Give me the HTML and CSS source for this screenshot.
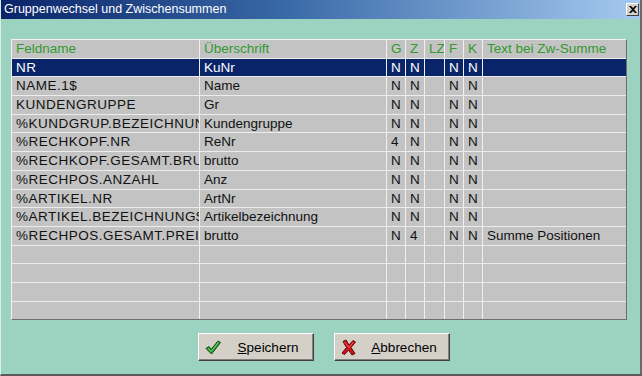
FILE: index.html
```html
<!DOCTYPE html>
<html lang="de">
<head>
<meta charset="utf-8">
<title>Gruppenwechsel und Zwischensummen</title>
<link rel="stylesheet" href="styles.css">
</head>
<body>
<div class="window">
  <div class="titlebar">
    <span class="title">Gruppenwechsel und Zwischensummen</span>
    <span class="close">
      <svg width="8" height="7" viewBox="0 0 8 7"><path d="M0 0h2l2 2 2-2h2L5 3.5 8 7H6L4 5 2 7H0l3-3.5z" fill="#000"/></svg>
    </span>
  </div>
  <div class="body">
    <div class="grid">
      <div class="row head"><div class="c">Feldname</div><div class="c">Überschrift</div><div class="c">G</div><div class="c">Z</div><div class="c">LZ</div><div class="c">F</div><div class="c">K</div><div class="c">Text bei Zw-Summe</div></div>
      <div class="row sel"><div class="c">NR</div><div class="c">KuNr</div><div class="c">N</div><div class="c">N</div><div class="c"></div><div class="c">N</div><div class="c">N</div><div class="c"></div></div>
      <div class="row"><div class="c">NAME.1$</div><div class="c">Name</div><div class="c">N</div><div class="c">N</div><div class="c"></div><div class="c">N</div><div class="c">N</div><div class="c"></div></div>
      <div class="row"><div class="c">KUNDENGRUPPE</div><div class="c">Gr</div><div class="c">N</div><div class="c">N</div><div class="c"></div><div class="c">N</div><div class="c">N</div><div class="c"></div></div>
      <div class="row"><div class="c">%KUNDGRUP.BEZEICHNUNG</div><div class="c">Kundengruppe</div><div class="c">N</div><div class="c">N</div><div class="c"></div><div class="c">N</div><div class="c">N</div><div class="c"></div></div>
      <div class="row"><div class="c">%RECHKOPF.NR</div><div class="c">ReNr</div><div class="c">4</div><div class="c">N</div><div class="c"></div><div class="c">N</div><div class="c">N</div><div class="c"></div></div>
      <div class="row"><div class="c">%RECHKOPF.GESAMT.BRUTTO</div><div class="c">brutto</div><div class="c">N</div><div class="c">N</div><div class="c"></div><div class="c">N</div><div class="c">N</div><div class="c"></div></div>
      <div class="row"><div class="c">%RECHPOS.ANZAHL</div><div class="c">Anz</div><div class="c">N</div><div class="c">N</div><div class="c"></div><div class="c">N</div><div class="c">N</div><div class="c"></div></div>
      <div class="row"><div class="c">%ARTIKEL.NR</div><div class="c">ArtNr</div><div class="c">N</div><div class="c">N</div><div class="c"></div><div class="c">N</div><div class="c">N</div><div class="c"></div></div>
      <div class="row"><div class="c">%ARTIKEL.BEZEICHNUNG$</div><div class="c">Artikelbezeichnung</div><div class="c">N</div><div class="c">N</div><div class="c"></div><div class="c">N</div><div class="c">N</div><div class="c"></div></div>
      <div class="row"><div class="c">%RECHPOS.GESAMT.PREIS</div><div class="c">brutto</div><div class="c">N</div><div class="c">4</div><div class="c"></div><div class="c">N</div><div class="c">N</div><div class="c">Summe Positionen</div></div>
      <div class="row"><div class="c"></div><div class="c"></div><div class="c"></div><div class="c"></div><div class="c"></div><div class="c"></div><div class="c"></div><div class="c"></div></div>
      <div class="row"><div class="c"></div><div class="c"></div><div class="c"></div><div class="c"></div><div class="c"></div><div class="c"></div><div class="c"></div><div class="c"></div></div>
      <div class="row"><div class="c"></div><div class="c"></div><div class="c"></div><div class="c"></div><div class="c"></div><div class="c"></div><div class="c"></div><div class="c"></div></div>
      <div class="row last"><div class="c"></div><div class="c"></div><div class="c"></div><div class="c"></div><div class="c"></div><div class="c"></div><div class="c"></div><div class="c"></div></div>
    </div>
    <div class="buttons">
      <div class="btn">
        <svg class="icon" width="16" height="15" viewBox="0 0 16 15">
          <path d="M1 8.5 L4 6.5 L6 9.5 L13 1 L15.5 2.5 L6.5 14 Z" fill="#2a9a2a" stroke="#0d4a12" stroke-width="1" stroke-linejoin="round"/>
          <path d="M3 8 L6 11.5 L13.5 2.3" fill="none" stroke="#7fd47a" stroke-width="1"/>
        </svg>
        <span class="label"><u>S</u>peichern</span>
      </div>
      <div class="btn">
        <svg class="icon" width="16" height="17" viewBox="0 0 16 17">
          <path d="M2 2.5 L5 1 L8 6 L12 1.5 L14.5 3 L10 8.5 L14 14.5 L11 16 L7.5 11 L3.5 15.5 L1 14 L5.5 8.5 Z" fill="#c8141a" stroke="#6a0008" stroke-width="1" stroke-linejoin="round"/>
          <path d="M3.5 3 L8 8.5 M12.5 3 L8 8.5" stroke="#ee5a5a" stroke-width="1"/>
        </svg>
        <span class="label"><u>A</u>bbrechen</span>
      </div>
    </div>
  </div>
</div>
</body>
</html>
```
FILE: styles.css
```css
html, body {
  margin: 0;
  padding: 0;
  background: #9bd3c0;
}
body {
  width: 642px;
  height: 376px;
  overflow: hidden;
  font-family: "Liberation Sans", Arial, sans-serif;
}
.window {
  box-sizing: border-box;
  width: 642px;
  height: 376px;
  background: #9bd3c0;
  border-left: 1px solid #d8efe6;
  border-right: 2px solid #6a6a6a;
  border-bottom: 2px solid #5a5a5a;
  display: flex;
  flex-direction: column;
}
.titlebar {
  height: 19px;
  flex: none;
  display: flex;
  align-items: center;
  justify-content: space-between;
  padding: 0 1px 0 3px;
  background: linear-gradient(to right, #0a246a 0%, #3a6aa8 45%, #a6caf0 100%);
}
.title {
  color: #fff;
  font-size: 12.5px;
  line-height: 19px;
  white-space: nowrap;
}
.close {
  box-sizing: border-box;
  width: 13px;
  height: 13px;
  background: #d4d0c8;
  border-top: 1px solid #fff;
  border-left: 1px solid #fff;
  border-right: 1px solid #404040;
  border-bottom: 1px solid #404040;
  display: flex;
  align-items: center;
  justify-content: center;
}
.body {
  padding: 20px 0 0 10px;
  display: flex;
  flex-direction: column;
}
.grid {
  width: 614px;
  background: #c3c3c3;
  border-top: 1px solid #f2f2f2;
  border-left: 1px solid #f2f2f2;
  border-right: 1px solid #6e6e6e;
  border-bottom: 1px solid #6e6e6e;
}
.row {
  display: grid;
  grid-template-columns: 188px 187px 19px 19px 20px 19px 19px 143px;
  height: 18.7px;
  box-sizing: border-box;
  border-bottom: 1px solid #ececec;
  font-size: 13.5px;
  color: #111;
}
.row.last {
  border-bottom: none;
  height: 17.7px;
}
.c {
  box-sizing: border-box;
  border-right: 1px solid #f0f0f0;
  padding-left: 4px;
  overflow: hidden;
  white-space: nowrap;
  line-height: 17.7px;
}
.c:first-child {
  letter-spacing: 0.5px;
}
.head .c:first-child {
  letter-spacing: 0;
}
.c:last-child {
  border-right: none;
}
.head {
  color: #2f9a2f;
}
.sel {
  background: #0a246a;
  color: #fff;
}
.buttons {
  display: flex;
  justify-content: center;
  gap: 20px;
  margin-top: 13px;
  padding-right: 3px;
}
.btn {
  box-sizing: border-box;
  width: 116px;
  height: 28px;
  background: #d4d0c8;
  border-top: 1px solid #fff;
  border-left: 1px solid #fff;
  border-right: 1px solid #404040;
  border-bottom: 1px solid #404040;
  box-shadow: inset -1px -1px 0 #808080;
  display: flex;
  align-items: center;
  padding-left: 6px;
  font-size: 13.5px;
  color: #000;
}
.icon {
  flex: none;
}
.label {
  flex: 1;
  text-align: center;
  padding-left: 2px;
}
```
